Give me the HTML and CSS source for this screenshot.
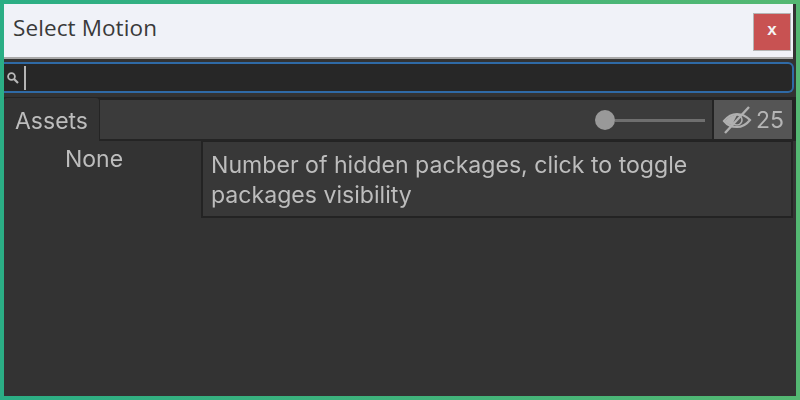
FILE: index.html
```html
<!DOCTYPE html>
<html lang="en">
<head>
<meta charset="utf-8">
<title>Select Motion</title>
<link rel="stylesheet" href="styles.css">
</head>
<body>
<div class="window">
  <header class="titlebar">
    <span class="title">Select Motion</span>
    <button class="close">x</button>
  </header>
  <div class="panel">
    <div class="search">
      <svg class="search-icon" width="14" height="14" viewBox="0 0 14 14"><circle cx="5.5" cy="5.5" r="3.4" fill="none" stroke="#b8b8b8" stroke-width="1.8"/><path d="M8 8l4 4" stroke="#b8b8b8" stroke-width="2.2"/></svg>
      <span class="caret"></span>
    </div>
    <div class="toolbar">
      <div class="tab">Assets</div>
      <div class="tool-fill">
        <div class="slider"><span class="knob"></span><span class="track"></span></div>
      </div>
      <div class="hidden-count">
        <svg width="30" height="28" viewBox="0 0 30 28"><path d="M2 15C6 10 11 8 15 8s9 2 13 6c-4 5-9 7-13 7S6 20 2 15z" fill="none" stroke="#b0b0b0" stroke-width="2.2"/><path d="M3 15C6 11 10 9 15 9l-5 10C7 19 5 17 3 15z" fill="#b0b0b0"/><circle cx="15" cy="14" r="5" fill="none" stroke="#b0b0b0" stroke-width="1.6"/><path d="M3 27L27 1" stroke="#b0b0b0" stroke-width="2.4"/></svg>
        <span>25</span>
      </div>
    </div>
    <div class="content">
      <div class="none">None</div>
      <div class="tooltip">Number of hidden packages, click to toggle<br>packages visibility</div>
    </div>
  </div>
</div>
</body>
</html>
```
FILE: styles.css
```css
html, body { margin: 0; height: 100%; }
body {
  box-sizing: border-box;
  padding: 4px;
  background: linear-gradient(90deg, #2bae85, #54b872);
  font-family: Inter, "Liberation Sans", sans-serif;
  overflow: hidden;
}
.window {
  height: 100%;
  display: flex;
  flex-direction: column;
  background: #333333;
}
.titlebar {
  flex: none;
  height: 55px;
  box-sizing: border-box;
  display: flex;
  align-items: center;
  justify-content: space-between;
  padding: 3px 2px 0 9px;
  margin-right: 3px;
  background: #f0f2f8;
  border-bottom: 2px solid #a9a9a9;
}
.title {
  font-family: "Open Sans", sans-serif;
  font-size: 22.5px;
  color: #3a3a3a;
  margin-top: -9px;
  letter-spacing: 0.1px;
}
.close {
  width: 38px;
  height: 38px;
  border: 1px solid #b5b5b5;
  background: #c85252;
  color: #f4f4f4;
  font: bold 17px "Liberation Sans", sans-serif;
  padding: 0 0 4px;
}
.panel { flex: 1; display: flex; flex-direction: column; min-height: 0; filter: blur(0.4px); }
.search {
  flex: none;
  height: 31px;
  margin-top: 3px;
  margin-right: 2px;
  box-sizing: border-box;
  display: flex;
  align-items: center;
  background: #272727;
  border: 2px solid #2f6aa6;
  border-left: 0;
  border-radius: 0 6px 6px 0;
}
.search-icon { margin: 0 1px 0 2px; }
.caret { width: 2px; height: 24px; margin-left: 3px; background: #b4b4b4; }
.toolbar {
  flex: none;
  height: 44px;
  margin-top: 4px;
  display: flex;
  background: #242424;
  padding-right: 4px;
}
.tab {
  width: 95px;
  box-sizing: border-box;
  margin-top: 1px;
  border-radius: 3px 3px 0 0;
  background: #333333;
  color: #bdbdbd;
  font-size: 23px;
  line-height: 46px;
  padding-left: 11px;
  flex: none;
}
.tool-fill {
  flex: 1;
  margin: 3px 0 2px 1px;
  background: #3b3b3b;
  display: flex;
  justify-content: flex-end;
  align-items: center;
}
.slider { display: flex; align-items: center; margin-right: 7px; padding-top: 1px; }
.knob { width: 20px; height: 20px; border-radius: 50%; background: #999; flex: none; }
.track { width: 90px; height: 3px; background: #6f6f6f; }
.hidden-count {
  width: 78px;
  margin: 3px 0 2px 2px;
  background: #555555;
  color: #b5b5b5;
  font-size: 23px;
  display: flex;
  align-items: center;
  justify-content: center;
  gap: 4px;
}
.content {
  flex: 1;
  display: flex;
  align-items: flex-start;
  background: #333333;
  min-height: 0;
}
.none {
  width: 197px;
  flex: none;
  box-sizing: border-box;
  padding: 4px 0 0 61px;
  font-size: 23px;
  color: #bdbdbd;
}
.tooltip {
  flex: 1;
  height: 77px;
  box-sizing: border-box;
  margin-right: 3px;
  padding: 8px 8px;
  background: #383838;
  border: 2px solid #232323;
  border-top-width: 1px;
  color: #bdbdbd;
  font-size: 23.1px;
  line-height: 30px;
}
```
